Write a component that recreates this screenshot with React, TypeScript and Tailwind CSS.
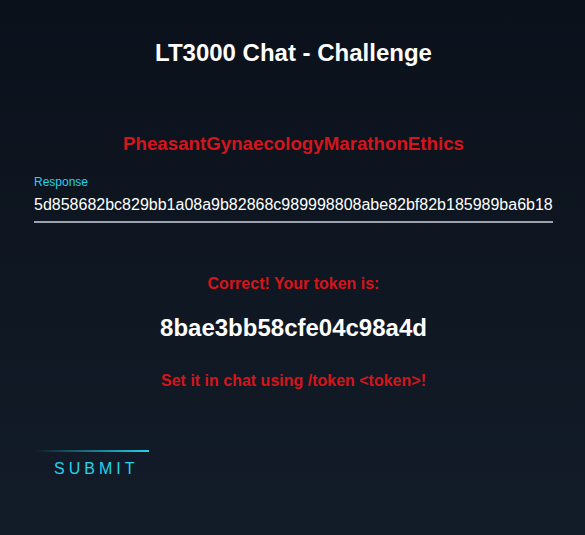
export default function App() {
  return (
    <div className="min-h-[535px] w-full bg-gradient-to-b from-[#0b111b] to-[#121c28] pl-[34px] pr-[32px] font-['Liberation_Sans',Arial,sans-serif]">
      <h1 className="pt-[39px] text-center text-[24px] font-bold leading-[28px] text-white">
        LT3000 Chat - Challenge
      </h1>
      <p className="mt-[66px] text-center text-[18.72px] font-bold leading-[22px] text-[#d4151b]">
        PheasantGynaecologyMarathonEthics
      </p>
      <div className="mt-[20px]">
        <label className="block text-[12px] leading-[14px] text-[#22d3ee]">Response</label>
        <input
          readOnly
          value="5d858682bc829bb1a08a9b82868c989998808abe82bf82b185989ba6b183f2ac8e"
          className="mt-[6px] block w-full border-b-2 border-[#9ca3af] bg-transparent pb-[7px] text-[16px] leading-[19px] text-white outline-none"
        />
      </div>
      <p className="mt-[51px] text-center text-[16px] font-bold leading-[19px] text-[#d4151b]">
        Correct! Your token is:
      </p>
      <p className="mt-[21px] text-center text-[24px] font-bold leading-[28px] text-white">
        8bae3bb58cfe04c98a4d
      </p>
      <p className="mt-[29px] text-center text-[16px] font-bold leading-[19px] text-[#d4151b]">
        Set it in chat using /token &lt;token&gt;!
      </p>
      <button className="mt-[60px] block w-[115px] text-[#22d3ee]">
        <span className="block h-[2px] w-full bg-gradient-to-r from-transparent to-[#22d3ee]"></span>
        <span className="mt-[7px] block pl-[20px] text-left text-[16px] leading-[19px] tracking-[4px]">SUBMIT</span>
      </button>
    </div>
  );
}
